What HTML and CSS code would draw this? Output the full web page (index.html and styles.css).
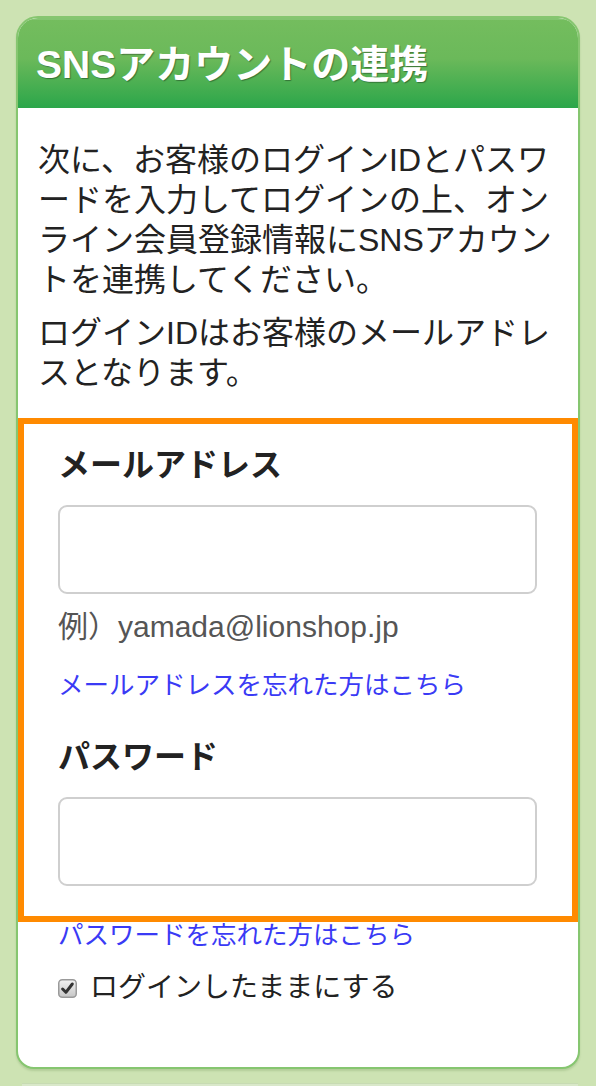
FILE: index.html
```html
<!DOCTYPE html>
<html lang="ja">
<head>
<meta charset="utf-8">
<title>SNSアカウントの連携</title>
<link rel="stylesheet" href="styles.css">
</head>
<body>
<div class="card">
  <div class="card-head">
    <h1 class="card-title">SNSアカウントの連携</h1>
  </div>
  <div class="intro">
    <p>次に、お客様のログインIDとパスワードを入力してログインの上、オンライン会員登録情報にSNSアカウントを連携してください。</p>
    <p>ログインIDはお客様のメールアドレスとなります。</p>
  </div>
  <div class="login-box">
    <div class="field-label">メールアドレス</div>
    <input class="text-input" type="text" aria-label="メールアドレス">
    <div class="example">例）yamada@lionshop.jp</div>
    <a class="forgot" href="#">メールアドレスを忘れた方はこちら</a>
    <div class="field-label field-label-second">パスワード</div>
    <input class="text-input" type="password" aria-label="パスワード">
  </div>
  <div class="after">
    <a class="forgot forgot-pass" href="#">パスワードを忘れた方はこちら</a>
    <label class="keep">
      <span class="check-box">
        <svg width="19" height="19" viewBox="0 0 19 19">
          <defs>
            <linearGradient id="cbg" x1="0" y1="0" x2="0" y2="1">
              <stop offset="0" stop-color="#f2f2f2"/>
              <stop offset="1" stop-color="#c6c6c6"/>
            </linearGradient>
          </defs>
          <rect x="0.75" y="0.75" width="17.5" height="17.5" rx="3.5" fill="url(#cbg)" stroke="#9a9a9a" stroke-width="1.5"/>
          <path d="M4.6 10 L7.9 13.3 L14.3 5" fill="none" stroke="#333" stroke-width="3" stroke-linecap="round" stroke-linejoin="round"/>
        </svg>
      </span>
      <span class="keep-text">ログインしたままにする</span>
    </label>
  </div>
</div>
<div class="next-card"></div>
</body>
</html>
```

FILE: styles.css
```css
html, body {
  margin: 0;
  padding: 0;
}
body {
  background: #cde3b3;
  padding: 16px 16px 0 16px;
  font-family: "Liberation Sans", "Noto Sans CJK JP", sans-serif;
  color: #222;
  overflow: hidden;
  height: 1086px;
  box-sizing: border-box;
}
.card {
  background: #fff;
  border: 2px solid #86c670;
  border-radius: 22px 22px 18px 18px;
  overflow: hidden;
  box-shadow: 0 2px 2px rgba(60, 110, 40, 0.18);
}
.card-head {
  height: 90px;
  background: linear-gradient(#74bd5e 0%, #6bb95a 45%, #2ba64a 100%);
  box-shadow: inset 0 2px 0 rgba(255, 255, 255, 0.12);
  display: flex;
  align-items: center;
  padding: 3px 18px 0 18px;
  box-sizing: border-box;
}
.card-title {
  margin: 0;
  color: #fff;
  font-size: 39px;
  font-weight: bold;
  line-height: 50px;
  text-shadow: 1px 1px 1px rgba(0, 0, 0, 0.35);
}
.intro {
  padding: 32px 20px 25px 20px;
  font-size: 32px;
  line-height: 40px;
}
.intro p {
  margin: 0;
}
.intro p + p {
  margin-top: 13px;
}
.login-box {
  border: 6px solid #ff8a00;
  padding: 21px 35px 30px 34px;
  display: flex;
  flex-direction: column;
  align-items: flex-start;
}
.field-label {
  font-size: 32px;
  font-weight: bold;
  line-height: 40px;
  color: #222;
}
.field-label-second {
  margin-top: 34px;
}
.text-input {
  display: block;
  width: 100%;
  height: 89px;
  margin: 20px 0 0 0;
  box-sizing: border-box;
  border: 2px solid #cfcfcf;
  border-radius: 9px;
  background: #fff;
  font-size: 30px;
  padding: 0 14px;
  outline: none;
}
.example {
  margin-top: 13px;
  font-size: 30px;
  line-height: 40px;
  color: #555;
}
.forgot {
  display: block;
  margin-top: 20px;
  font-size: 25.5px;
  line-height: 36px;
  color: #3a3af5;
  text-decoration: none;
}
.after {
  padding: 0 20px 59px 40px;
}
.forgot-pass {
  margin-top: 0;
  line-height: 26px;
}
.keep {
  display: flex;
  align-items: center;
  margin-top: 20px;
  height: 40px;
}
.check-box {
  display: flex;
  width: 19px;
  height: 19px;
  margin-right: 13px;
}
.keep-text {
  font-size: 28px;
  line-height: 40px;
  color: #222;
}
.next-card {
  margin: 14px 2px 0 6px;
  height: 8px;
  background: #d9e8c9;
  border-top: 1px solid #c7dbb3;
}
```
